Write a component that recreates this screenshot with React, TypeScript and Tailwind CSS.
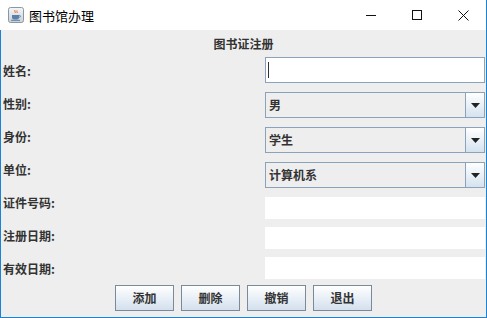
const cjk = { fontFamily: '"Noto Sans CJK SC", "Noto Sans", sans-serif' };

const labels = ["姓名:", "性别:", "身份:", "单位:", "证件号码:", "注册日期:", "有效日期:"];
const buttons = ["添加", "删除", "撤销", "退出"];

function JavaIcon() {
  return (
    <svg width="16" height="16" viewBox="0 0 16 16">
      <defs>
        <linearGradient id="jbg" x1="0" y1="0" x2="0" y2="1">
          <stop offset="0" stopColor="#f4f6f8" />
          <stop offset="1" stopColor="#c9d1da" />
        </linearGradient>
      </defs>
      <rect x="0.5" y="0.5" width="15" height="15" rx="2" fill="url(#jbg)" stroke="#8c96a0" />
      <path d="M7 3c-1 1 1 2 0 3M9 3.5c-.8.8.8 1.5 0 2.5" stroke="#e06a1a" strokeWidth="1" fill="none" />
      <path d="M4 8h7v2.5c0 1.2-1 2-2 2H6c-1 0-2-.8-2-2z" fill="#5a7fa8" />
      <path d="M11 8.6h1c.8 0 .8 1.6 0 1.6h-1" stroke="#5a7fa8" strokeWidth="0.8" fill="none" />
      <rect x="3" y="12.8" width="9" height="1" fill="#5a7fa8" />
    </svg>
  );
}

function Combo({ value }: { value: string }) {
  return (
    <div className="flex h-[26px] w-[220px] border border-[#8aa3bb] bg-[#eeeeee]">
      <div className="flex flex-1 items-center pl-[3px] text-[12px] font-bold text-[#333333]">{value}</div>
      <div className="flex w-[19px] items-center justify-center border-l border-[#8aa3bb] bg-gradient-to-b from-white to-[#d5e2ef]">
        <svg width="9" height="5" viewBox="0 0 9 5">
          <path d="M0 0h9L4.5 5z" fill="#222222" />
        </svg>
      </div>
    </div>
  );
}

export default function App() {
  return (
    <div className="flex h-[318px] w-[487px] flex-col bg-white text-black" style={cjk}>
      {/* title bar */}
      <div className="flex h-[30px] items-center border-r border-[#1883d7] bg-white">
        <div className="ml-[8px]">
          <JavaIcon />
        </div>
        <span className="ml-[5px] text-[13px] leading-none">图书馆办理</span>
        <div className="ml-auto flex h-full items-center">
          <div className="flex h-full w-[46px] items-center justify-center">
            <svg width="10" height="10" viewBox="0 0 10 10">
              <path d="M0 5.5h10" stroke="#111" strokeWidth="1" />
            </svg>
          </div>
          <div className="flex h-full w-[46px] items-center justify-center">
            <svg width="10" height="10" viewBox="0 0 10 10">
              <rect x="0.5" y="0.5" width="9" height="9" fill="none" stroke="#111" strokeWidth="1" />
            </svg>
          </div>
          <div className="flex h-full w-[46px] items-center justify-center">
            <svg width="11" height="11" viewBox="0 0 11 11">
              <path d="M0.5 0.5l10 10M10.5 0.5l-10 10" stroke="#111" strokeWidth="1" />
            </svg>
          </div>
        </div>
      </div>

      {/* content */}
      <div className="flex flex-1 flex-col border-x border-b border-[#1883d7] bg-[#eeeeee]">
        <div className="h-[24px] pt-[6px] text-center text-[12px] font-bold leading-4 text-[#333333]">图书证注册</div>

        <div className="flex h-[231px]">
          <div className="flex w-[264px] flex-col">
            {labels.map((l) => (
              <div key={l} className="flex h-[33px] items-center pl-[2px] text-[12px] font-bold text-[#333333]">
                {l}
              </div>
            ))}
          </div>
          <div className="flex flex-col pt-[3px]">
            <div className="flex h-[26px] w-[220px] items-center border border-[#8aa3bb] bg-white pl-[2px]">
              <div className="h-[16px] w-px bg-[#333333]" />
            </div>
            <div className="mt-[9px]">
              <Combo value="男" />
            </div>
            <div className="mt-[9px]">
              <Combo value="学生" />
            </div>
            <div className="mt-[9px]">
              <Combo value="计算机系" />
            </div>
            <div className="mt-[9px] h-[22px] w-[220px] bg-white" />
            <div className="mt-[8px] h-[22px] w-[220px] bg-white" />
            <div className="mt-[8px] h-[22px] w-[220px] bg-white" />
          </div>
        </div>

        <div className="flex justify-center gap-[7px]">
          {buttons.map((b) => (
            <div
              key={b}
              className="flex h-[26px] w-[59px] items-center justify-center border border-[#7a8a99] bg-gradient-to-b from-white to-[#d3e0ee] text-[12px] font-bold text-[#333333]"
            >
              {b}
            </div>
          ))}
        </div>
      </div>
    </div>
  );
}
